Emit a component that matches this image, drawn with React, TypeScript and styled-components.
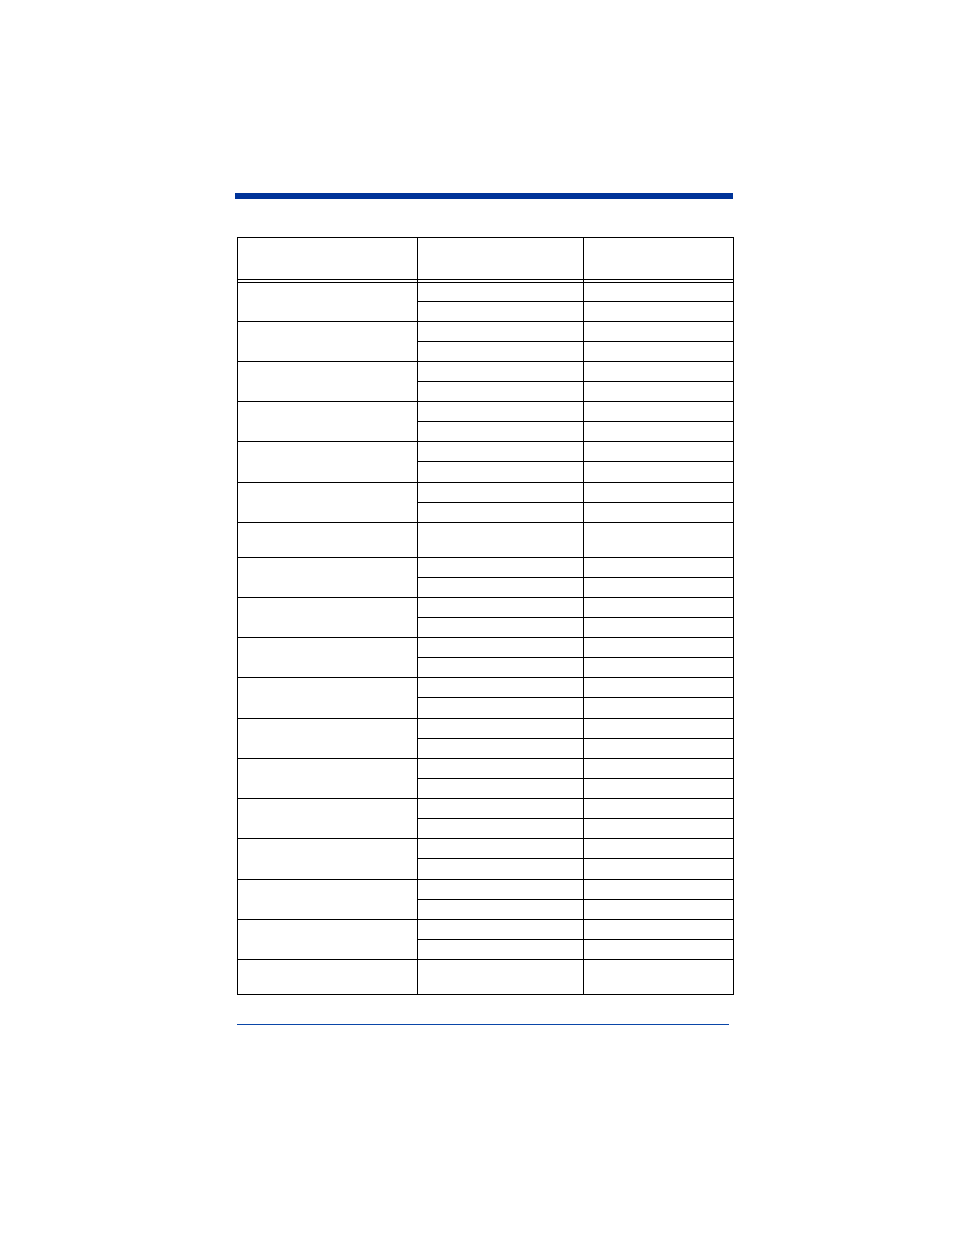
import React from "react";
import styled, { createGlobalStyle } from "styled-components";

const GlobalStyle = createGlobalStyle`
  html, body {
    margin: 0;
    padding: 0;
    background: #ffffff;
    font-family: "Liberation Sans", Arial, sans-serif;
  }
`;

const Page = styled.div`
  width: 954px;
  min-height: 1235px;
  padding: 193px 0 0 235px;
  box-sizing: border-box;
  display: flex;
  flex-direction: column;
`;

const TopBar = styled.div`
  width: 498px;
  height: 6px;
  background: #003399;
`;

const Table = styled.div`
  margin: 38px 0 0 2px;
  width: 497px;
  box-sizing: border-box;
  border: 1px solid #000;
  display: flex;
  flex-direction: column;
`;

const HeaderRow = styled.div`
  display: grid;
  grid-template-columns: 180px 166px 1fr;
  height: 45px;
  box-sizing: border-box;
  border-bottom: 1px solid #000;
  background: linear-gradient(#000, #000) 0 41px / 100% 1px no-repeat;
`;

const Cell = styled.div<{ $last?: boolean }>`
  box-sizing: border-box;
  border-right: ${(p) => (p.$last ? "none" : "1px solid #000")};
`;

const Group = styled.div<{ $h: number }>`
  display: grid;
  grid-template-columns: 180px 1fr;
  height: ${(p) => p.$h}px;
  box-sizing: border-box;
  border-bottom: 1px solid #000;
  &:last-child {
    border-bottom: none;
  }
`;

const SubRows = styled.div`
  display: flex;
  flex-direction: column;
`;

const SubRow = styled.div<{ $h?: number }>`
  display: grid;
  grid-template-columns: 166px 1fr;
  box-sizing: border-box;
  flex: ${(p) => (p.$h ? `0 0 ${p.$h}px` : "1")};
  border-bottom: ${(p) => (p.$h ? "1px solid #000" : "none")};
`;

const SingleRow = styled.div<{ $h: number }>`
  display: grid;
  grid-template-columns: 180px 166px 1fr;
  height: ${(p) => p.$h}px;
  box-sizing: border-box;
  border-bottom: 1px solid #000;
  &:last-child {
    border-bottom: none;
  }
`;

const FootLine = styled.div`
  margin: 29px 0 0 2px;
  width: 492px;
  height: 1px;
  background: #0a46a8;
`;

type RowSpec = { kind: "group" | "single"; h: number };

const rows: RowSpec[] = [
  { kind: "group", h: 39 },
  { kind: "group", h: 40 },
  { kind: "group", h: 40 },
  { kind: "group", h: 40 },
  { kind: "group", h: 41 },
  { kind: "group", h: 40 },
  { kind: "single", h: 35 },
  { kind: "group", h: 40 },
  { kind: "group", h: 40 },
  { kind: "group", h: 40 },
  { kind: "group", h: 41 },
  { kind: "group", h: 40 },
  { kind: "group", h: 40 },
  { kind: "group", h: 40 },
  { kind: "group", h: 41 },
  { kind: "group", h: 40 },
  { kind: "group", h: 40 },
  { kind: "single", h: 34 },
];

export default function App() {
  return (
    <>
      <GlobalStyle />
      <Page>
        <TopBar />
        <Table>
          <HeaderRow>
            <Cell />
            <Cell />
            <Cell $last />
          </HeaderRow>
          {rows.map((r, i) =>
            r.kind === "group" ? (
              <Group key={i} $h={r.h}>
                <Cell />
                <SubRows>
                  <SubRow $h={Math.floor(r.h / 2)}>
                    <Cell />
                    <Cell $last />
                  </SubRow>
                  <SubRow>
                    <Cell />
                    <Cell $last />
                  </SubRow>
                </SubRows>
              </Group>
            ) : (
              <SingleRow key={i} $h={r.h}>
                <Cell />
                <Cell />
                <Cell $last />
              </SingleRow>
            )
          )}
        </Table>
        <FootLine />
      </Page>
    </>
  );
}
